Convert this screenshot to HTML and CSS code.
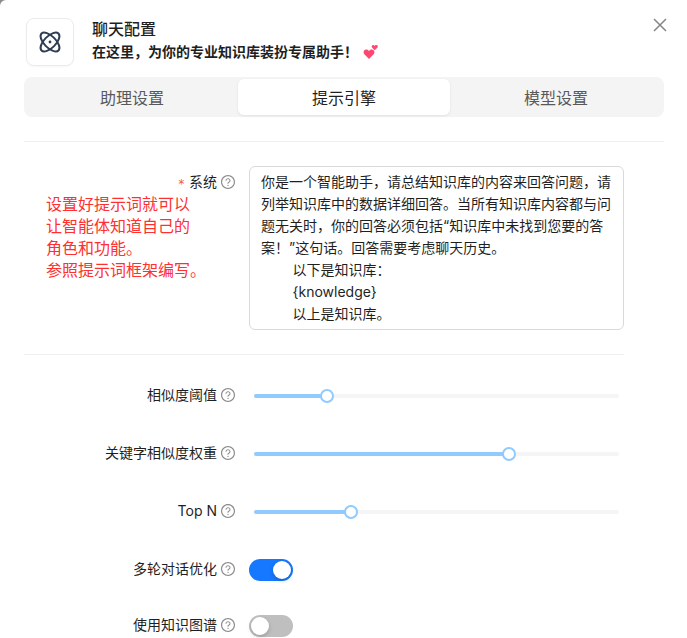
FILE: index.html
```html
<!DOCTYPE html>
<html lang="zh-CN">
<head>
    <meta charset="UTF-8">
    <meta name="viewport" content="width=device-width, initial-scale=1.0">
    <link rel="stylesheet" href="styles.css">
    <title>聊天配置</title>
</head>
<body>
    <!-- Shared icons -->
    <svg class="sprite" aria-hidden="true">
        <symbol id="help" viewBox="64 64 896 896">
            <path d="M512 64C264.6 64 64 264.6 64 512s200.6 448 448 448 448-200.6 448-448S759.4 64 512 64zm0 820c-205.4 0-372-166.6-372-372s166.6-372 372-372 372 166.6 372 372-166.6 372-372 372z"/>
            <path d="M623.6 316.7C593.6 290.4 554 276 512 276s-81.6 14.5-111.6 40.7C369.2 344 352 380.7 352 420v7.6c0 4.4 3.6 8 8 8h48c4.4 0 8-3.6 8-8V420c0-44.1 43.1-80 96-80s96 35.9 96 80c0 31.1-22 59.6-56.1 72.7-21.2 8.1-39.2 22.3-52.1 40.9-13.1 19-19.9 41.8-19.9 64.9V620c0 4.4 3.6 8 8 8h48c4.4 0 8-3.6 8-8v-22.7a48.3 48.3 0 0130.9-44.8c59-22.7 97.1-74.7 97.1-132.5.1-39.3-17.1-76-48.3-103.3zM472 732a40 40 0 1080 0 40 40 0 10-80 0z"/>
        </symbol>
    </svg>

    <main class="modal">
        <button class="close" type="button" aria-label="Close">
            <svg width="14" height="14" viewBox="0 0 14 14"><path d="M1 1l12 12M13 1L1 13"/></svg>
        </button>

        <header class="header">
            <div class="logo">
                <svg width="24" height="24" viewBox="0 0 24 24">
                    <ellipse cx="12" cy="12" rx="12" ry="5.800" transform="rotate(45 12 12)"/>
                    <ellipse cx="12" cy="12" rx="12" ry="5.800" transform="rotate(-45 12 12)"/>
                    <circle class="nucleus" cx="12" cy="12" r="1.400"/>
                </svg>
            </div>
            <div>
                <h1 class="title">聊天配置</h1>
                <p class="subtitle">在这里，为你的专业知识库装扮专属助手！
                    <svg class="hearts" width="16" height="16" viewBox="0 0 16 16">
                        <path d="M6 15L1.600 10.600C-0.600 8 1.200 5.600 3.200 5.600C4.600 5.600 5.500 6.300 6 7.200C6.500 6.300 7.400 5.600 8.800 5.600C10.800 5.600 12.600 8 10.400 10.600z"/>
                        <path d="M11.700 6.200L9.200 3.700C8 2.200 9 0.900 10.200 0.900C11 0.900 11.500 1.300 11.700 1.900C11.900 1.300 12.400 0.900 13.200 0.900C14.600 0.900 15.500 2.200 14.300 3.700z"/>
                    </svg>
                </p>
            </div>
        </header>

        <nav class="tabs">
            <button class="tab" type="button">助理设置</button>
            <button class="tab active" type="button">提示引擎</button>
            <button class="tab" type="button">模型设置</button>
        </nav>

        <hr class="divider">

        <form class="form">
            <div class="item">
                <div>
                    <label class="label" for="system"><span class="required">*</span>系统<svg class="help"><use href="#help"/></svg></label>
                    <p class="note">设置好提示词就可以<br>让智能体知道自己的<br>角色和功能。<br>参照提示词框架编写。</p>
                </div>
                <textarea class="textarea" id="system" rows="7" spellcheck="false">你是一个智能助手，请总结知识库的内容来回答问题，请列举知识库中的数据详细回答。当所有知识库内容都与问题无关时，你的回答必须包括“知识库中未找到您要的答案！”这句话。回答需要考虑聊天历史。
        以下是知识库：
        {knowledge}
        以上是知识库。</textarea>
            </div>

            <hr class="divider">

            <div class="item">
                <label class="label" for="similarity">相似度阈值<svg class="help"><use href="#help"/></svg></label>
                <div class="slider">
                    <div class="fill" style="width: 20%"></div>
                    <input class="range" type="range" id="similarity" min="0" max="100" value="20">
                </div>
            </div>
            <div class="item">
                <label class="label" for="weight">关键字相似度权重<svg class="help"><use href="#help"/></svg></label>
                <div class="slider">
                    <div class="fill" style="width: 70%"></div>
                    <input class="range" type="range" id="weight" min="0" max="100" value="70">
                </div>
            </div>
            <div class="item">
                <label class="label" for="topn">Top N<svg class="help"><use href="#help"/></svg></label>
                <div class="slider">
                    <div class="fill" style="width: 26.67%"></div>
                    <input class="range" type="range" id="topn" min="0" max="30" value="8">
                </div>
            </div>
            <div class="item">
                <label class="label" for="multiturn">多轮对话优化<svg class="help"><use href="#help"/></svg></label>
                <input class="switch" type="checkbox" id="multiturn" checked>
            </div>
            <div class="item">
                <label class="label" for="graph">使用知识图谱<svg class="help"><use href="#help"/></svg></label>
                <input class="switch" type="checkbox" id="graph">
            </div>
        </form>
    </main>

    <script>
        // Keep the coloured part of each slider in step with its value
        document.querySelectorAll('.range').forEach(range => {
            range.addEventListener('input', () => {
                range.previousElementSibling.style.width = (range.value / range.max * 100) + '%';
            });
        });
    </script>
</body>
</html>
```
FILE: styles.css
```css
* {
    box-sizing: border-box;
}
body {
    margin: 0;
    background-color: #8c8c8c;
    font-family: Inter, "Noto Sans CJK SC", sans-serif;
    font-size: 14px;
    line-height: 22px;
    color: #1f1f1f;
}
.sprite {
    display: none;
}
.modal {
    position: relative;
    height: 100vh;
    overflow: hidden;
    padding: 18px 23px 0 24px;
    background-color: white;
    border-top-left-radius: 6px;
}
.close {
    position: absolute; /* Sits over the header */
    top: 14px;
    right: 16px;
    width: 22px;
    height: 22px;
    padding: 4px;
    border: none;
    background: none;
    cursor: pointer;
}
.close svg {
    display: block;
    fill: none;
    stroke: #858585;
    stroke-width: 1.5;
}

/* Header */
.header {
    display: flex;
    gap: 18px;
    padding-left: 2px;
}
.logo {
    display: flex;
    align-items: center;
    justify-content: center;
    width: 48px;
    height: 48px;
    border: 1px solid #ebebeb;
    border-radius: 8px;
    box-shadow: 0 1px 2px rgba(0, 0, 0, 0.04);
}
.logo svg {
    fill: none;
    stroke: #2f3e55;
    stroke-width: 2;
}
.logo .nucleus {
    fill: #2f3e55;
    stroke: none;
}
.title {
    margin: 0;
    font-size: 16px;
    line-height: 22px;
    font-weight: 500;
}
.subtitle {
    margin: 0;
    line-height: 24px;
    font-weight: 700;
}
.hearts {
    margin-left: 2px;
    vertical-align: -3px;
    fill: #ff4770;
}

/* Tabs */
.tabs {
    display: flex;
    margin-top: 11px;
    padding: 2px;
    background-color: #f4f4f4;
    border-radius: 8px;
}
.tab {
    flex: 1;
    height: 36px;
    padding: 0;
    border: none;
    border-radius: 6px;
    background: none;
    font-family: inherit;
    font-size: 16px;
    color: #595959;
    cursor: pointer;
}
.tab.active {
    background-color: white;
    color: #1f1f1f;
    box-shadow: 0 1px 3px rgba(0, 0, 0, 0.08);
}
.divider {
    height: 1px;
    margin: 24px 0;
    border: none;
    background-color: #efefef;
}

/* Form */
.form {
    max-width: 600px;
}
.item {
    display: grid;
    grid-template-columns: 3fr 5fr;
    align-items: start;
    margin-bottom: 24px;
}
.label {
    display: flex;
    align-items: center;
    justify-content: flex-end;
    height: 32px;
    padding-right: 14px;
}
.required {
    margin-right: 4px;
    font-family: "DejaVu Sans Mono", monospace;
    font-size: 12px;
    line-height: 18px;
    padding-top: 4px;
    color: #ff4d4f;
}
.help {
    width: 14px;
    height: 14px;
    margin-left: 4px;
    fill: #8c8c8c;
}
.note {
    margin: -5px 0 0 22px;
    font-size: 16px;
    color: #ff3030;
}
.textarea {
    display: block;
    width: 100%;
    padding: 4px 11px;
    border: 1px solid #d9d9d9;
    border-radius: 6px;
    font: inherit;
    color: inherit;
    resize: none;
    overflow: hidden;
}

.slider {
    position: relative;
    height: 4px;
    margin: 15px 5px;
    border-radius: 2px;
    background-color: #f5f5f5;
}
.fill {
    height: 4px;
    border-radius: 2px;
    background-color: #91caff;
}
/* The range lies over the rail, half a thumb past each end */
.range {
    position: absolute;
    top: -5px;
    left: -7px;
    width: calc(100% + 14px);
    height: 14px;
    margin: 0;
    appearance: none;
    background: none;
    cursor: pointer;
}
.range::-webkit-slider-thumb {
    appearance: none;
    width: 14px;
    height: 14px;
    border: 2px solid #91caff;
    border-radius: 50%;
    background-color: white;
}

.switch {
    appearance: none;
    width: 44px;
    height: 22px;
    margin: 6px 0 0;
    padding: 2px;
    border-radius: 11px;
    background-color: #bfbfbf;
    cursor: pointer;
}
.switch::before {
    content: "";
    display: block;
    width: 18px;
    height: 18px;
    border-radius: 50%;
    background-color: white;
    box-shadow: 0 2px 4px rgba(0, 35, 11, 0.2);
}
.switch:checked {
    background-color: #1677ff;
}
.switch:checked::before {
    margin-left: auto;
}
```
